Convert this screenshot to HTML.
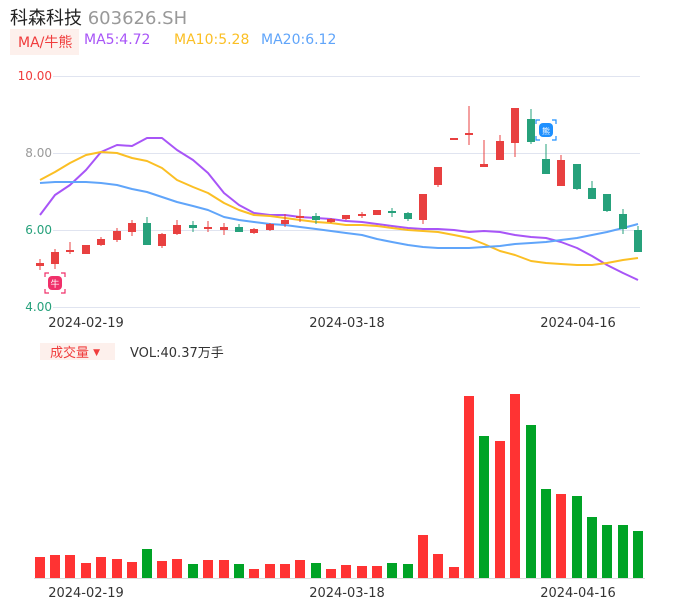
<!DOCTYPE html><html><head><meta charset="utf-8"><style>
body{margin:0;width:686px;height:606px;background:#fff;font-family:"DejaVu Sans","Noto Sans CJK SC",sans-serif;position:relative;overflow:hidden}
.a{position:absolute;white-space:nowrap}
</style></head><body>
<div class="a" style="left:10px;top:4px;font-size:18px;color:#222">科森科技 <span style="color:#999">603626.SH</span></div>
<div class="a" style="left:10px;top:29px;width:69px;height:26px;background:#fdf0ec"></div>
<div class="a" style="left:18px;top:32px;font-size:14px;color:#f03c3c">MA/牛熊</div>
<div class="a" style="left:84px;top:32px;font-size:14px;color:#a855f7">MA5:4.72</div>
<div class="a" style="left:174px;top:32px;font-size:14px;color:#fbbf24">MA10:5.28</div>
<div class="a" style="left:261px;top:32px;font-size:14px;color:#60a5fa">MA20:6.12</div>
<div class="a" style="left:40px;top:343px;width:75px;height:17px;background:#fdf0ec"></div>
<div class="a" style="left:50px;top:342px;font-size:13px;color:#f03c3c">成交量 <span style="font-size:9px;vertical-align:2px">▼</span></div>
<div class="a" style="left:130px;top:342px;font-size:13px;color:#333">VOL:40.37万手</div>
<svg class="a" style="left:0;top:0" width="686" height="606">
<g stroke="#e0e4f0" stroke-width="1"><line x1="53" y1="76.5" x2="640" y2="76.5"/><line x1="53" y1="153.5" x2="640" y2="153.5"/><line x1="53" y1="230.5" x2="640" y2="230.5"/><line x1="53" y1="307.5" x2="640" y2="307.5"/><line x1="34" y1="578.5" x2="645" y2="578.5" stroke="#ddd"/></g>
<g font-size="12" text-anchor="end" font-family="DejaVu Sans,sans-serif"><text x="52" y="80" fill="#f03c3c">10.00</text><text x="52" y="157" fill="#999">8.00</text><text x="52" y="234" fill="#26a17b">6.00</text><text x="52" y="311" fill="#26a17b">4.00</text></g>
<g font-size="13" fill="#333" text-anchor="middle" font-family="DejaVu Sans,sans-serif"><text x="86" y="327">2024-02-19</text><text x="347" y="327">2024-03-18</text><text x="578" y="327">2024-04-16</text><text x="86" y="597">2024-02-19</text><text x="347" y="597">2024-03-18</text><text x="578" y="597">2024-04-16</text></g>
<g fill="none" stroke-width="2" stroke-linejoin="round">
<polyline stroke="#a855f7" points="40,215 55,195 70,185 86,170 101,152 117,145 132,146 147,138 162,138 177,150 193,160 208,173 224,193 239,205 254,213 270,215 285,215 300,217 316,218 331,219 346,221 362,222 377,224 392,226 408,228 423,229 438,229 454,230 469,232 484,231 500,232 515,235 531,237 546,238 561,242 577,248 592,256 607,265 623,273 638,280"/>
<polyline stroke="#fbbf24" points="40,180 55,172 70,163 86,155 101,152 117,153 132,158 147,161 162,168 177,180 193,187 208,193 224,203 239,210 254,215 270,216 285,218 300,220 316,222 331,223 346,225 362,225 377,226 392,228 408,230 423,231 438,232 454,235 469,238 484,244 500,251 515,255 531,261 546,263 561,264 577,265 592,265 607,263 623,260 638,258"/>
<polyline stroke="#60a5fa" points="40,183 55,182 70,182 86,182 101,183 117,185 132,189 147,192 162,197 177,202 193,206 208,210 224,217 239,220 254,222 270,224 285,225 300,227 316,229 331,231 346,233 362,235 377,239 392,242 408,245 423,247 438,248 454,248 469,248 484,247 500,246 515,244 531,243 546,242 561,240 577,238 592,235 607,232 623,228 638,224"/>
</g>
<g id="c"></g>
<g id="v"></g>
<g transform="translate(45,273)"><rect x="3" y="3" width="14" height="14" rx="4" fill="#f0306a"/><path d="M0 4V0H4M16 0H20V4M20 16V20H16M4 20H0V16" stroke="#f0306a" fill="none" stroke-width="1.2"/><text x="10" y="14" font-size="9" fill="#fff" text-anchor="middle">牛</text></g>
<g transform="translate(536,120)"><rect x="3" y="3" width="14" height="14" rx="4" fill="#1e90ff"/><path d="M0 4V0H4M16 0H20V4M20 16V20H16M4 20H0V16" stroke="#1e90ff" fill="none" stroke-width="1.2"/><text x="10" y="14" font-size="8" fill="#fff" text-anchor="middle">熊</text></g>
</svg>
<script>
var R="#e84040",G="#26a17b";
var C=[[40,263,266,259,270,R],[55,252,264,249,269,R],[70,250,252,242,254,R],[86,245,254,245,254,R],[101,239,245,237,246,R],[117,231,240,228,242,R],[132,223,232,220,236,R],[147,223,245,217,245,G],[162,234,246,233,248,R],[177,225,234,220,235,R],[193,225,228,221,232,G],[208,227,229,221,232,R],[224,227,230,223,235,R],[239,227,232,224,232,G],[254,229,233,228,234,R],[270,224,230,223,231,R],[285,220,224,214,227,R],[300,216,218,209,222,R],[316,216,220,213,224,G],[331,219,222,218,223,R],[346,215,219,215,220,R],[362,214,216,212,218,R],[377,210,215,210,215,R],[392,211,213,208,217,G],[408,213,219,212,221,G],[423,194,220,194,224,R],[438,167,185,167,187,R],[454,138,139,138,139,R],[469,133,135,106,145,R],[484,164,167,140,167,R],[500,141,160,135,160,R],[515,108,143,108,157,R],[531,119,142,109,144,G],[546,159,174,144,174,G],[561,160,186,155,186,R],[577,164,189,164,190,G],[592,188,199,181,199,G],[607,194,211,194,212,G],[623,214,229,209,234,G],[638,230,252,226,252,G]];
var s="";C.forEach(function(c){s+='<line x1="'+c[0]+'" x2="'+c[0]+'" y1="'+c[3]+'" y2="'+c[4]+'" stroke="'+c[5]+'"/><rect x="'+(c[0]-4)+'" y="'+c[1]+'" width="8" height="'+Math.max(2,c[2]-c[1])+'" fill="'+c[5]+'"/>';});
document.getElementById("c").innerHTML=s;
var V=[[557,1],[555,1],[555,1],[563,1],[557,1],[559,1],[562,1],[549,0],[561,1],[559,1],[564,0],[560,1],[560,1],[564,0],[569,1],[564,1],[564,1],[560,1],[563,0],[569,1],[565,1],[566,1],[566,1],[563,0],[564,0],[535,1],[554,1],[567,1],[396,1],[436,0],[441,1],[394,1],[425,0],[489,0],[494,1],[496,0],[517,0],[525,0],[525,0],[531,0]];
s="";V.forEach(function(v,i){var x=C[i][0];s+='<rect x="'+(x-5)+'" y="'+v[0]+'" width="10" height="'+(578-v[0])+'" fill="'+(v[1]?"#ff3333":"#00a326")+'"/>';});
document.getElementById("v").innerHTML=s;
</script>
</body></html>
